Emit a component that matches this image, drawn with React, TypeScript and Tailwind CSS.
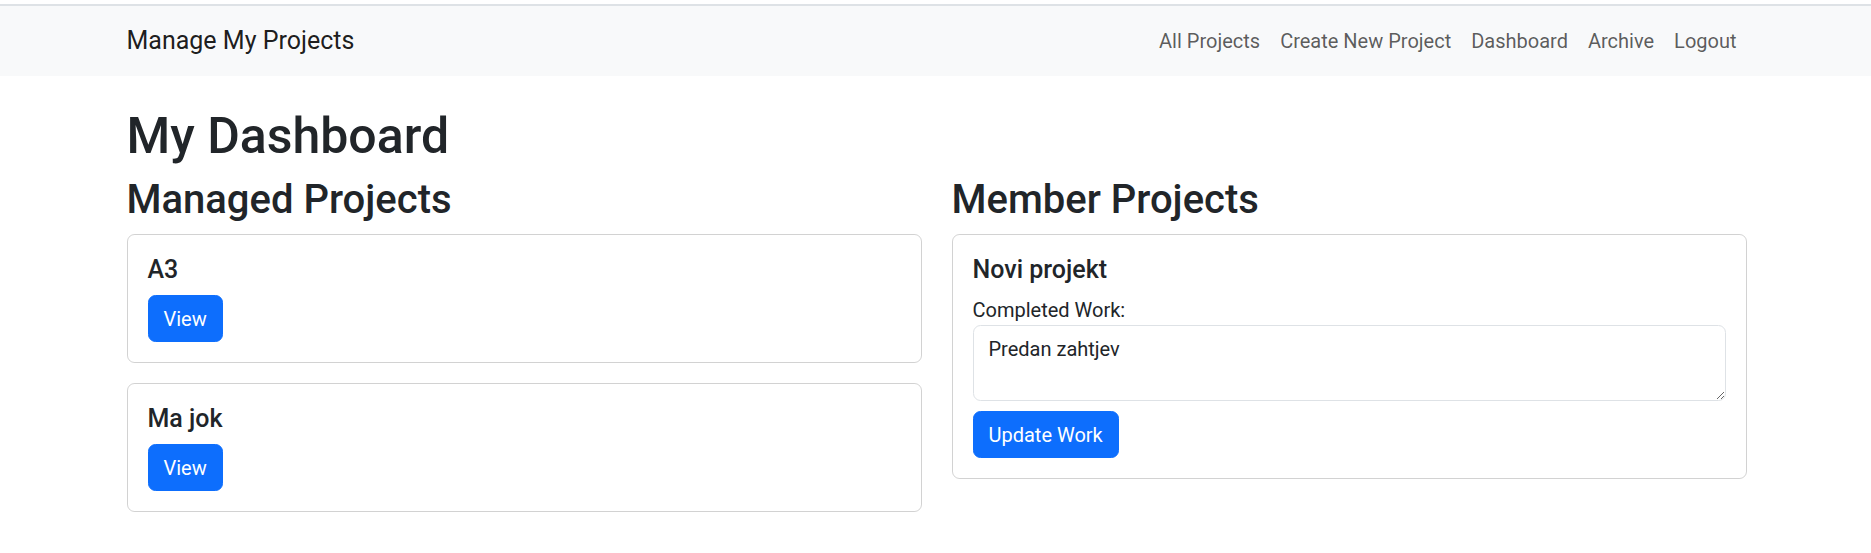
import { useState } from "react";

type Project = { id: number; name: string };

const managed: Project[] = [
  { id: 1, name: "A3" },
  { id: 2, name: "Ma jok" },
];

const navLinks = ["All Projects", "Create New Project", "Dashboard", "Archive", "Logout"];

function Button({ children }: { children: React.ReactNode }) {
  return (
    <button className="rounded-[7.5px] border border-[#0d6efd] bg-[#0d6efd] px-[15px] py-[7.5px] text-[20px] leading-[30px] text-white">
      {children}
    </button>
  );
}

export default function App() {
  const [work, setWork] = useState("Predan zahtjev");

  return (
    <div className="min-h-screen bg-white font-[Roboto,sans-serif] text-[#212529]">
      <div className="h-[4px] bg-white" />
      <div className="h-[2px] bg-[#dee2e6]" />
      <nav className="bg-[#f8f9fa] py-[10px]">
        <div className="mx-auto flex w-[1650px] items-center justify-between pl-[16px] pr-[14px]">
          <a href="#" className="py-[6.25px] text-[25px] leading-[37.5px] text-black/90">
            Manage My Projects
          </a>
          <ul className="flex">
            {navLinks.map((link) => (
              <li key={link}>
                <a href="#" className="block px-[10px] py-[10px] text-[20px] leading-[30px] text-black/65">
                  {link}
                </a>
              </li>
            ))}
          </ul>
        </div>
      </nav>

      <main className="mx-auto w-[1650px] pl-[16px] pr-[14px] pt-[30px]">
        <h1 className="mb-[10px] text-[50px] font-medium leading-[60px]">My Dashboard</h1>
        <div className="grid grid-cols-2 gap-[30px]">
          <section>
            <h2 className="mb-[10px] text-[40px] font-medium leading-[48px]">Managed Projects</h2>
            {managed.map((p) => (
              <div key={p.id} className="mb-[20px] rounded-[7.5px] border border-black/[0.175] p-[20px]">
                <h5 className="mb-[10px] text-[25px] font-medium leading-[30px]">{p.name}</h5>
                <Button>View</Button>
              </div>
            ))}
          </section>

          <section>
            <h2 className="mb-[10px] text-[40px] font-medium leading-[48px]">Member Projects</h2>
            <div className="mb-[20px] rounded-[7.5px] border border-black/[0.175] p-[20px]">
              <h5 className="mb-[10px] text-[25px] font-medium leading-[30px]">Novi projekt</h5>
              <label className="block text-[20px] leading-[30px]">Completed Work:</label>
              <textarea
                rows={2}
                value={work}
                onChange={(e) => setWork(e.target.value)}
                className="mb-[10px] block h-[76px] w-full rounded-[7.5px] border border-[#dee2e6] px-[15px] py-[7.5px] text-[20px] leading-[30px] text-[#212529] outline-none"
              />
              <Button>Update Work</Button>
            </div>
          </section>
        </div>
      </main>
    </div>
  );
}
